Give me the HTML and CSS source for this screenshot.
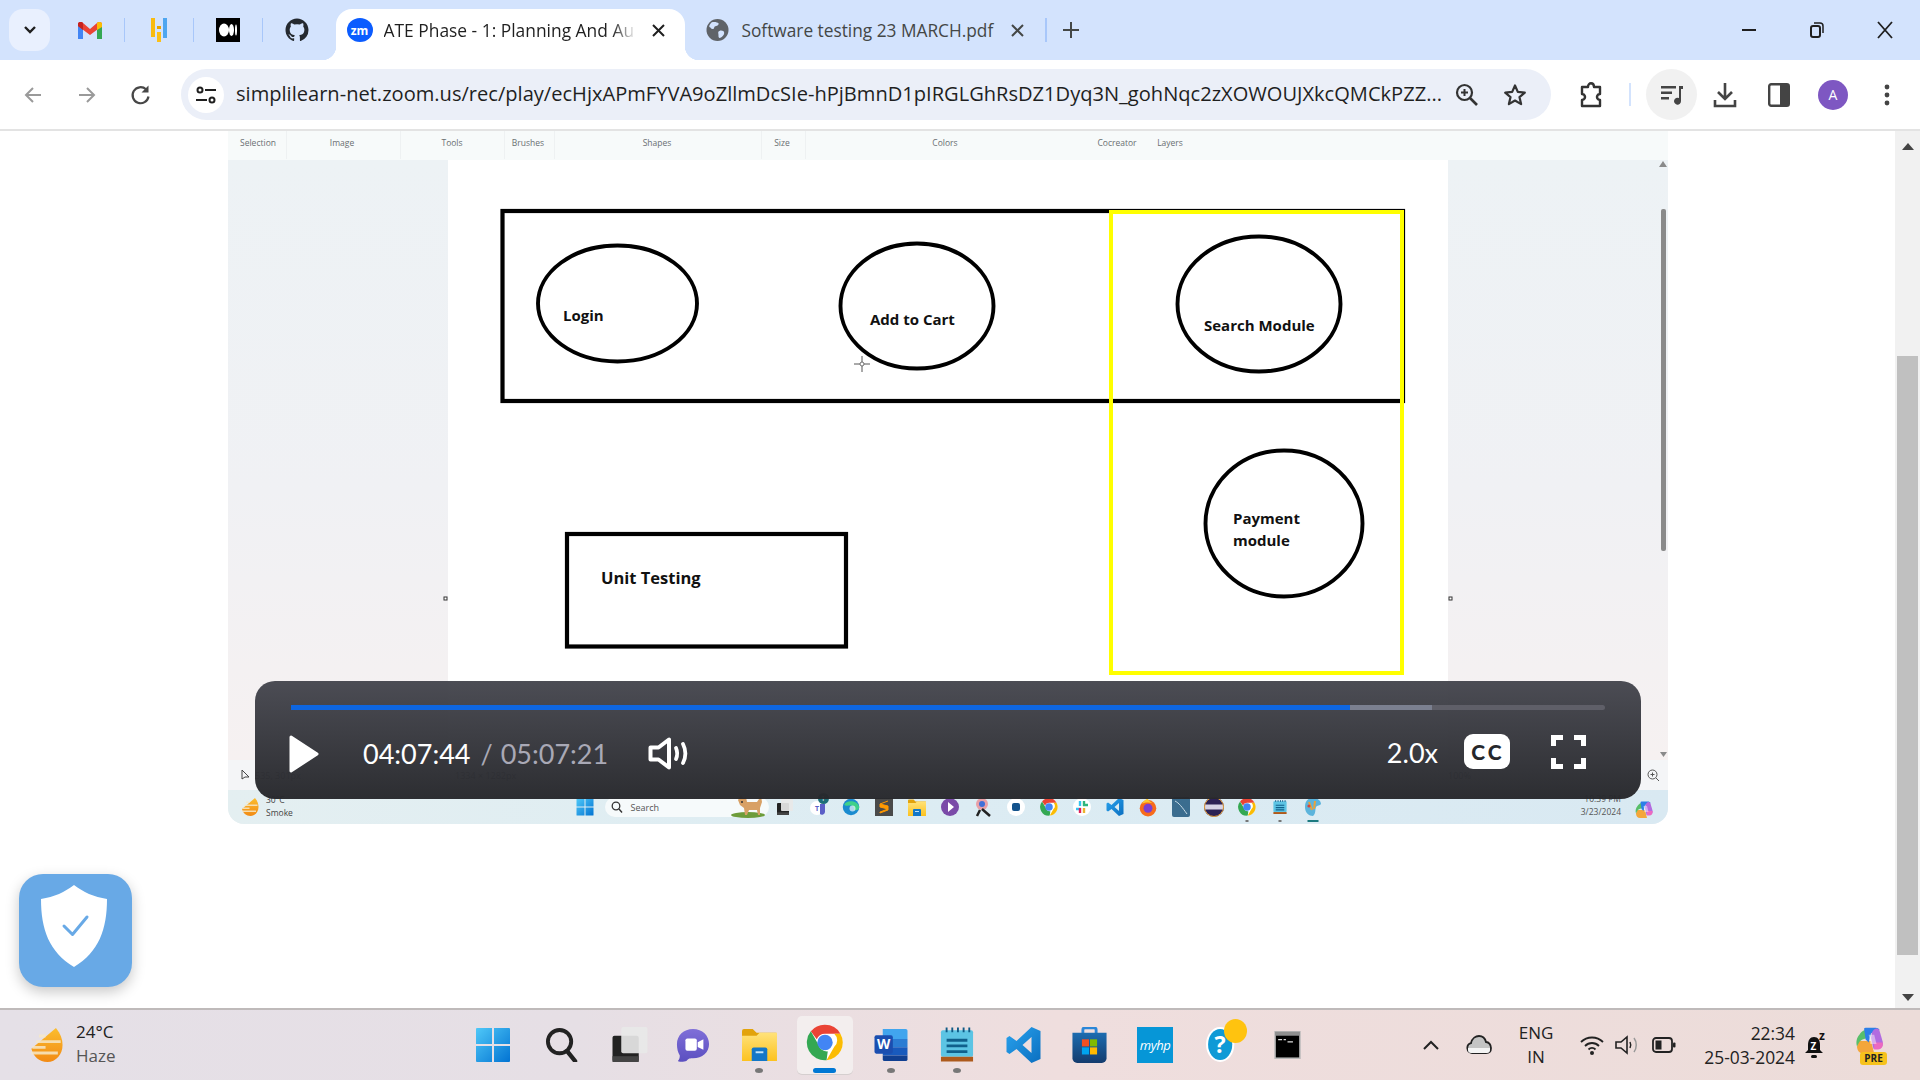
FILE: index.html
```html
<!DOCTYPE html>
<html lang="en">
<head>
<meta charset="utf-8">
<title>ATE Phase - 1: Planning And Automation</title>
<link rel="stylesheet" href="styles.css">
</head>
<body>
<svg class="sprite" width="0" height="0" aria-hidden="true">
  <defs>
    <linearGradient id="gWin" x1="0" y1="0" x2="1" y2="1"><stop offset="0" stop-color="#4fc8f8"/><stop offset="1" stop-color="#0273d2"/></linearGradient>
    <linearGradient id="gFolder" x1="0" y1="0" x2="0" y2="1"><stop offset="0" stop-color="#ffe27a"/><stop offset="1" stop-color="#fcc21f"/></linearGradient>
    <linearGradient id="gVs" x1="0" y1="0" x2="1" y2="1"><stop offset="0" stop-color="#2aa3ee"/><stop offset="1" stop-color="#0b6fc0"/></linearGradient>
    <linearGradient id="gSun" x1="0" y1="0" x2="0" y2="1"><stop offset="0" stop-color="#fbbd2e"/><stop offset="1" stop-color="#f28a14"/></linearGradient>
    <linearGradient id="gStore" x1="0" y1="0" x2="0" y2="1"><stop offset="0" stop-color="#1c6cb0"/><stop offset="1" stop-color="#143c6e"/></linearGradient>
    <linearGradient id="gMeet" x1="0" y1="0" x2="0" y2="1"><stop offset="0" stop-color="#7f6fd8"/><stop offset="1" stop-color="#5b4fc0"/></linearGradient>
    <symbol id="i-win" viewBox="0 0 36 36"><path fill="url(#gWin)" d="M1 2a1 1 0 0 1 1-1h15v16H1zM19 1h15a1 1 0 0 1 1 1v15H19zM1 19h16v16H2a1 1 0 0 1-1-1zM19 19h16v15a1 1 0 0 1-1 1H19z"/></symbol>
    <symbol id="i-search" viewBox="0 0 34 36"><circle cx="15" cy="15" r="12" fill="none" stroke="#222" stroke-width="4"/><path d="M23 25l8 10" stroke="#222" stroke-width="4.5" stroke-linecap="round"/></symbol>
    <symbol id="i-tasks" viewBox="0 0 36 36"><rect x="0" y="9" width="27" height="27" rx="2" fill="#222"/><path fill="#444" d="M0 30h27v6H0z"/><rect x="9" y="0" width="27" height="27" rx="2" fill="#e8e8e8" opacity=".92"/></symbol>
    <symbol id="i-meet" viewBox="0 0 36 36"><path fill="url(#gMeet)" d="M18 1c10 0 17 7 17 16s-7 15-17 15c-3 0-5 0-7 3-2 1-9 1-9 0 2-2 2-5 2-6-2-3-3-7-3-12C1 8 8 1 18 1z"/><rect x="10" y="11" width="12" height="13" rx="2" fill="#fff"/><path fill="#fff" d="M23 15l6-3v11l-6-3z"/></symbol>
    <symbol id="i-folder" viewBox="0 0 36 34"><path fill="#e2a30c" d="M0 3a2 2 0 0 1 2-2h9l4 4h20a1 1 0 0 1 1 1v4H0z"/><path fill="url(#gFolder)" d="M0 8h15l3-3h18v29H0z"/><path fill="#1277c8" d="M10 22a2 2 0 0 1 2-2h12a2 2 0 0 1 2 2v12H10z"/><rect x="14" y="24" width="8" height="2" fill="#bfe3fa"/></symbol>
    <symbol id="i-chrome" viewBox="0 0 48 48"><circle cx="24" cy="24" r="23" fill="#fff"/><path fill="#ea4335" d="M24 1a23 23 0 0 1 20 11.5H24a11.5 11.5 0 0 0-10.7 7.3L5.6 9.5A23 23 0 0 1 24 1z"/><path fill="#fbbc04" d="M44 12.500a23 23 0 0 1-18 34.400l10-17.300a11.500 11.500 0 0 0 0-17.100z"/><path fill="#34a853" d="M5.600 9.500l10 17.300a11.500 11.500 0 0 0 12 8.700l-1.600 11.400A23 23 0 0 1 5.600 9.500z"/><circle cx="24" cy="24" r="10" fill="#4285f4"/></symbol>
    <symbol id="i-word" viewBox="0 0 36 36"><path fill="#41a5ee" d="M9 1h25a2 2 0 0 1 2 2v9H9z"/><path fill="#2b7cd3" d="M9 12h27v9H9z"/><path fill="#185abd" d="M9 21h27v9H9z"/><path fill="#103f91" d="M9 30h27v4a2 2 0 0 1-2 2H11a2 2 0 0 1-2-2z"/><rect x="0" y="8" width="20" height="20" rx="2" fill="#1a4eb0"/><text x="10" y="23" class="svg-w">W</text></symbol>
    <symbol id="i-note" viewBox="0 0 36 36"><rect x="1" y="3" width="34" height="28" rx="2" fill="#5cc4e4"/><path fill="#10608c" d="M7 12h22v3H7zM7 18h22v3H7zM7 24h22v3H7z"/><path fill="#0f5a86" d="M6 0h2v5H6zM12 0h2v5h-2zM18 0h2v5h-2zM24 0h2v5h-2zM30 0h2v5h-2z"/><rect x="1" y="31" width="34" height="5" fill="#ad5a1c"/></symbol>
    <symbol id="i-vs" viewBox="0 0 36 36"><path fill="url(#gVs)" d="M26 0l9 4v28l-9 4-15-14-7 5-3-2v-14l3-2 7 5zM26 10l-9 8 9 8z"/></symbol>
    <symbol id="i-store" viewBox="0 0 36 38"><path fill="none" stroke="#2a86d8" stroke-width="3" d="M11 8V3a2 2 0 0 1 2-2h10a2 2 0 0 1 2 2v5"/><path fill="url(#gStore)" d="M0 6h36v27a5 5 0 0 1-5 5H5a5 5 0 0 1-5-5z"/><path fill="#f25022" d="M10 13h7.500v7.500H10z"/><path fill="#7fba00" d="M18.500 13H26v7.500h-7.500z"/><path fill="#00a4ef" d="M10 21.500h7.500V29H10z"/><path fill="#ffb900" d="M18.500 21.500H26V29h-7.500z"/></symbol>
    <symbol id="i-help" viewBox="0 0 36 42"><ellipse cx="17" cy="21" rx="17" ry="21" fill="#fff"/><ellipse cx="17" cy="21" rx="14.500" ry="18.500" fill="#0f9ad6"/><text x="17" y="31" class="svg-q">?</text></symbol>
    <symbol id="i-cmd" viewBox="0 0 34 36"><rect width="34" height="36" fill="#b9b9b9"/><rect x="1" y="1" width="32" height="5" fill="#8f8f8f"/><rect x="2" y="6" width="30" height="28" fill="#000"/><path stroke="#ddd" stroke-width="1.500" d="M5 11h5M12 11h3M17 14h7"/></symbol>
    <symbol id="i-cop" viewBox="0 0 36 36"><path fill="#f4a63a" d="M4 18h16l4 16H10c-5 0-8-4-8-9z"/><path fill="#58bf6a" d="M2 25c-2-6 0-12 3-15 2-3 4-5 7-6l3 10-6 2c-3 1-5 4-7 9z"/><path fill="#2c7fe8" d="M11 2c1-1 3-1 4-1h11c2 0 4 1 5 3L20 8l-3 12-4-4z"/><path fill="#b26be0" d="M27 2c2 0 3 1 4 3l4 14c1 4-1 9-6 9l-6 0-3-14 1-6c1-3 3-6 6-6z"/><path fill="#ec6ac0" d="M24 20h11c1 5-2 9-6 9h-5z"/><path fill="#fff" opacity=".45" d="M17 10h7l3 12h-8z"/></symbol>
    <symbol id="i-sun" viewBox="0 0 36 36"><path fill="url(#gSun)" d="M28 0c5 6 7 12 7 18 0 10-7 18-16 18S4 30 2 22z"/><path fill="#f6e8c8" d="M10 7h7v3h-7zM7 13h26v3H7zM3 19h14v3H3zM2 25h28v3H2z" opacity=".85"/></symbol>
    <symbol id="i-edge" viewBox="0 0 24 24"><circle cx="12" cy="12" r="11" fill="#1a8bd0"/><path fill="#3fd18a" d="M3 9c2-6 17-7 20 3 0 4-4 5-7 4 1-3-1-6-5-6-3 0-6 1-8-1z"/><circle cx="14" cy="14" r="4" fill="#fff" opacity=".65"/></symbol>
    <symbol id="i-fox" viewBox="0 0 24 24"><circle cx="12" cy="13" r="11" fill="#f76b1c"/><circle cx="12" cy="13" r="6" fill="#7b3fd0"/><path fill="#ffcb2e" d="M4 7c3-5 6-6 8-7 0 3 3 4 6 6-5-1-10-1-14 1z"/></symbol>
  </defs>
</svg>

<header class="tabbar">
  <div class="tabsearch"><svg width="14" height="10" viewBox="0 0 14 10"><path d="M2 2l5 5 5-5" fill="none" stroke="#1f1f1f" stroke-width="2.400"/></svg></div>
  <div class="pin first"><svg width="24" height="17" viewBox="0 0 24 17"><path fill="#4285f4" d="M0 2v15h5V5z"/><path fill="#34a853" d="M24 2v15h-5V5z"/><path fill="#ea4335" d="M0 2c0-2 3-3 5-1l7 6 7-6c2-2 5-1 5 1v2l-12 9L0 4z"/><path fill="#fbbc04" d="M19 1c2-2 5-1 5 1v3l-5 3z"/><path fill="#c5221f" d="M0 2c0-2 3-3 5-1v7L0 4z"/></svg></div>
  <span class="pinsep"></span>
  <div class="pin"><svg width="16" height="24" viewBox="0 0 16 24"><rect x="0" y="0" width="4" height="19" fill="#f9bb10"/><rect x="6" y="14" width="4" height="10" fill="#fbc018"/><rect x="6" y="8" width="4" height="3" fill="#e8a400"/><rect x="12" y="0" width="4" height="20" fill="#4ea6f0"/></svg></div>
  <span class="pinsep"></span>
  <div class="pin"><svg width="24" height="24" viewBox="0 0 24 24"><rect width="24" height="24" fill="#000"/><ellipse cx="8" cy="12" rx="5" ry="6.500" fill="#fff"/><ellipse cx="15.500" cy="12" rx="2.500" ry="6" fill="#fff"/><ellipse cx="20" cy="12" rx="1" ry="5.500" fill="#fff"/></svg></div>
  <span class="pinsep"></span>
  <div class="pin"><svg width="24" height="24" viewBox="0 0 24 24"><path fill="#24292f" d="M12 .5C5.730.5.500 5.730.500 12c0 5.080 3.290 9.390 7.860 10.910.580.110.790-.250.790-.560v-2.020c-3.200.700-3.880-1.360-3.880-1.360-.520-1.330-1.280-1.690-1.280-1.690-1.050-.720.080-.700.080-.700 1.160.080 1.770 1.190 1.770 1.190 1.030 1.770 2.700 1.260 3.360.960.100-.750.400-1.260.730-1.550-2.560-.290-5.250-1.280-5.250-5.690 0-1.260.450-2.290 1.190-3.100-.120-.290-.520-1.460.110-3.050 0 0 .970-.310 3.170 1.180a11 11 0 0 1 5.770 0c2.200-1.490 3.170-1.180 3.170-1.180.630 1.590.230 2.760.110 3.050.740.810 1.190 1.840 1.190 3.100 0 4.420-2.690 5.390-5.260 5.680.410.360.780 1.060.780 2.140v3.170c0 .310.210.670.800.560A11.500 11.500 0 0 0 23.500 12C23.500 5.730 18.270.5 12 .5z"/></svg></div>

  <div class="tab active">
    <span class="favicon-zm">zm</span>
    <span class="tabtitle fade">ATE Phase - 1: Planning And Au</span>
    <svg class="tabclose-a" width="13" height="13" viewBox="0 0 13 13"><path d="M1 1l11 11M12 1L1 12" stroke="#1f1f1f" stroke-width="2"/></svg>
  </div>
  <div class="tab inactive">
    <svg width="23" height="24" viewBox="0 0 24 24"><circle cx="12" cy="12" r="11.500" fill="#5f6368"/><path fill="#d3e3fd" d="M6 4c3-1 6 0 7 1s-1 3-3 3-1 3-3 3-2-2-3-2-1-2 2-5zM14 13c2-1 5 0 5 2s-2 4-4 5-2-1-2-3-1-3 1-4z"/></svg>
    <span class="tabtitle2">Software testing 23 MARCH.pdf</span>
    <svg class="tabclose-i" width="13" height="13" viewBox="0 0 13 13"><path d="M1 1l11 11M12 1L1 12" stroke="#444746" stroke-width="2"/></svg>
  </div>
  <span class="tabsep"></span>
  <svg class="newtab" width="16" height="16" viewBox="0 0 16 16"><path d="M8 0v16M0 8h16" stroke="#444746" stroke-width="2"/></svg>

  <div class="winctl">
    <div class="winbtn"><svg width="14" height="2" viewBox="0 0 14 2"><rect width="14" height="2" fill="#1f1f1f"/></svg></div>
    <div class="winbtn"><svg width="14" height="16" viewBox="0 0 14 16"><rect x="1" y="4" width="9" height="11" rx="2" fill="none" stroke="#1f1f1f" stroke-width="2"/><path d="M4 1h6a3 3 0 0 1 3 3v7" fill="none" stroke="#1f1f1f" stroke-width="1.500"/></svg></div>
    <div class="winbtn"><svg width="16" height="18" viewBox="0 0 16 18"><path d="M1 1l14 16M15 1L1 17" stroke="#1f1f1f" stroke-width="1.800"/></svg></div>
  </div>
</header>

<nav class="toolbar">
  <div class="navbtn"><svg width="20" height="20" viewBox="0 0 20 20"><path d="M18 10H3M10 3l-7 7 7 7" fill="none" stroke="#9a9a9a" stroke-width="2"/></svg></div>
  <div class="navbtn"><svg width="20" height="20" viewBox="0 0 20 20"><path d="M2 10h15M10 3l7 7-7 7" fill="none" stroke="#9a9a9a" stroke-width="2"/></svg></div>
  <div class="navbtn"><svg width="22" height="22" viewBox="0 0 22 22"><path d="M18.500 12.500A8 8 0 1 1 16 5.300" fill="none" stroke="#474747" stroke-width="2.200"/><path d="M18.500 1.500v7h-7z" fill="#474747"/></svg></div>
  <div class="omnibox">
    <span class="sitechip"><svg width="22" height="22" viewBox="0 0 22 22"><g fill="none" stroke="#1f1f1f" stroke-width="2"><circle cx="5" cy="6" r="2.500"/><path d="M10 6h11M1 16h11"/><circle cx="17" cy="16" r="2.500"/></g></svg></span>
    <span class="url">simplilearn-net.zoom.us/rec/play/ecHjxAPmFYVA9oZllmDcSIe-hPjBmnD1pIRGLGhRsDZ1Dyq3N_gohNqc2zXOWOUJXkcQMCkPZZ...</span>
    <span class="omni-act"><svg width="24" height="24" viewBox="0 0 24 24"><circle cx="9.500" cy="9.500" r="7.500" fill="none" stroke="#333" stroke-width="2.200"/><path d="M15 15l7 7" stroke="#333" stroke-width="2.600"/><path d="M6 9.500h7M9.500 6v7" stroke="#333" stroke-width="2"/></svg></span>
    <span class="omni-act"><svg width="24" height="24" viewBox="0 0 24 24"><path d="M12 2.500l2.800 6.400 7 .7-5.300 4.600 1.600 6.900-6.100-3.600-6.100 3.600 1.600-6.900L2.200 9.600l7-.7z" fill="none" stroke="#333" stroke-width="2.200" stroke-linejoin="round"/></svg></span>
  </div>
  <div class="navbtn ext"><svg width="26" height="28" viewBox="0 0 26 28"><path d="M4 6h6c0-5 6-5 6 0h6v7c-3 0-3 3-3 3s0 3 3 3v6H4v-6c3 0 3-3 3-3s0-3-3-3z" fill="none" stroke="#333" stroke-width="2.400" stroke-linejoin="round"/></svg></div>
  <span class="toolsep"></span>
  <div class="mediabtn"><svg width="24" height="22" viewBox="0 0 24 22"><path d="M1 2h15v2.400H1zM1 7.500h11v2.400H1zM1 13h8v2.400H1z" fill="#444"/><path d="M19 2h4v3h-2v12a3.500 3.500 0 1 1-2-3z" fill="#444"/></svg></div>
  <div class="navbtn first-right"><svg width="24" height="26" viewBox="0 0 24 26"><path d="M12 1v15M5 10l7 7 7-7" fill="none" stroke="#444" stroke-width="2.600"/><path d="M2 18v6h20v-6" fill="none" stroke="#444" stroke-width="2.600"/></svg></div>
  <div class="navbtn"><svg width="22" height="24" viewBox="0 0 22 24"><rect x="1.200" y="1.200" width="19.600" height="21.600" rx="2" fill="none" stroke="#444" stroke-width="2.400"/><rect x="12" y="1" width="9" height="22" fill="#444"/></svg></div>
  <div class="navbtn"><span class="avatar">A</span></div>
  <div class="navbtn"><svg width="6" height="22" viewBox="0 0 6 22"><circle cx="3" cy="3" r="2.400" fill="#444"/><circle cx="3" cy="11" r="2.400" fill="#444"/><circle cx="3" cy="19" r="2.400" fill="#444"/></svg></div>
</nav>

<main class="viewport">
  <div class="page">
    <section class="video">
      <div class="rec-toolbar">
        <span class="rt rt-sel">Selection</span>
        <span class="rt rt-img">Image</span>
        <span class="rt rt-tool">Tools</span>
        <span class="rt rt-brush">Brushes</span>
        <span class="rt rt-shape">Shapes</span>
        <span class="rt rt-size">Size</span>
        <span class="rt rt-color">Colors</span>
        <span class="rt rt-co">Cocreator</span>
        <span class="rt rt-layer">Layers</span>
        <i class="rt-sep rs1"></i><i class="rt-sep rs2"></i><i class="rt-sep rs3"></i><i class="rt-sep rs4"></i><i class="rt-sep rs5"></i><i class="rt-sep rs6"></i>
      </div>
      <div class="rec-body">
        <div class="paper"></div>
      </div>
      <div class="rec-status">
        <svg class="st-arrow" width="10" height="12" viewBox="0 0 10 12"><path d="M1 1v9l3-2 4 0z" fill="none" stroke="#444"/></svg>
        <span class="st-text st-pos">535, 301px</span>
        <span class="st-text st-dim">1334 × 1282px</span>
        <span class="st-text st-zoom">100%</span>
        <svg class="st-zoomin" width="13" height="13" viewBox="0 0 13 13"><circle cx="5.500" cy="5.500" r="4.500" fill="none" stroke="#555"/><path d="M9 9l3 3M3.500 5.500h4M5.500 3.500v4" stroke="#555"/></svg>
      </div>
      <div class="mini-task">
        <div class="mini-weather">
          <svg width="18" height="18"><use href="#i-sun"/></svg>
          <div class="mini-wtext"><span class="mw1">30°C</span><span class="mw2">Smoke</span></div>
        </div>
        <svg class="mini-start" width="18" height="18"><use href="#i-win"/></svg>
        <div class="mini-search">
          <svg width="12" height="12" viewBox="0 0 12 12"><circle cx="5" cy="5" r="3.800" fill="none" stroke="#333" stroke-width="1.300"/><path d="M8 8l3 3.500" stroke="#333" stroke-width="1.400"/></svg>
          <span>Search</span>
          <svg class="mini-dog" width="34" height="24" viewBox="0 0 34 24"><ellipse cx="17" cy="21" rx="17" ry="3" fill="#6d9c3a"/><path fill="#d8a065" d="M7 6l3-5 2 3 3-1 1 5h10l4-6 1 6-2 6v7h-2l-1-5h-8l-2 5h-2l-1-7-4-3z"/><circle cx="11" cy="8" r="1" fill="#333"/></svg>
        </div>
        <div class="mini-apps">
          <span class="mini-cell"><svg width="16" height="16"><use href="#i-tasks"/></svg></span>
          <span class="mini-cell mini-teams"><svg width="18" height="18" viewBox="0 0 18 18"><circle cx="8" cy="10" r="7" fill="#fff"/><text x="6" y="13" class="svg-t">T</text><path d="M11 6h5v8a3 3 0 0 1-5 2z" fill="#5b5fc7"/></svg><b class="mini-badge">1</b></span>
          <span class="mini-cell"><svg width="18" height="18"><use href="#i-edge"/></svg></span>
          <span class="mini-cell"><svg width="18" height="18" viewBox="0 0 18 18"><rect width="18" height="18" fill="#4a4a4a"/><path d="M13 3L5 6v3l8 2v-0l-8 3 0 1 8-3V8L5 6" fill="#ff9800" stroke="#ff9800"/></svg></span>
          <span class="mini-cell"><svg width="18" height="17"><use href="#i-folder"/></svg></span>
          <span class="mini-cell"><svg width="18" height="18" viewBox="0 0 18 18"><circle cx="9" cy="9" r="9" fill="#7a4aa8"/><path d="M7 4l6 5-6 5z" fill="#fff"/></svg></span>
          <span class="mini-cell"><svg width="18" height="20" viewBox="0 0 18 20"><circle cx="8" cy="7" r="6" fill="#e8a0a8"/><circle cx="8" cy="7" r="3" fill="#3f6fd8"/><path d="M8 12l8 7M6 13l-3 6" stroke="#222" stroke-width="2.500"/></svg></span>
          <span class="mini-cell"><svg width="18" height="18" viewBox="0 0 18 18"><circle cx="9" cy="9" r="9" fill="#fff"/><rect x="5" y="5" width="8" height="8" rx="2" fill="#14538c"/></svg></span>
          <span class="mini-cell"><svg width="18" height="20"><use href="#i-chrome"/></svg></span>
          <span class="mini-cell"><svg width="18" height="18" viewBox="0 0 18 18"><circle cx="9" cy="9" r="9" fill="#fff"/><path d="M7 3v5M3 11h5" stroke="#36c5f0" stroke-width="2.400"/><path d="M11 3v5M10 7h5" stroke="#2eb67d" stroke-width="2.400"/><path d="M11 10v5" stroke="#ecb22e" stroke-width="2.400"/><path d="M7 10v5" stroke="#e01e5a" stroke-width="2.400"/></svg></span>
          <span class="mini-cell"><svg width="18" height="18"><use href="#i-vs"/></svg></span>
          <span class="mini-cell"><svg width="18" height="19"><use href="#i-fox"/></svg></span>
          <span class="mini-cell"><svg width="18" height="20" viewBox="0 0 18 20"><rect width="18" height="20" rx="2" fill="#3b6d8f"/><path d="M3 4c4 2 7 6 12 13" stroke="#c9dde8" fill="none"/></svg></span>
          <span class="mini-cell"><svg width="20" height="20" viewBox="0 0 20 20"><circle cx="10" cy="10" r="10" fill="#2c2255"/><rect x="1" y="7.500" width="18" height="5" fill="#d6d3e6"/><circle cx="10" cy="10" r="9.500" fill="none" stroke="#e9a23b"/></svg></span>
          <span class="mini-cell mini-dot"><svg width="18" height="20"><use href="#i-chrome"/></svg></span>
          <span class="mini-cell mini-dot"><svg width="14" height="22"><use href="#i-note"/></svg></span>
          <span class="mini-cell mini-open"><svg width="18" height="20" viewBox="0 0 18 20"><path d="M9 1c5 0 8 3 8 6-1 2-4 1-5 3s0 7-3 9c-4 0-8-3-8-9s3-9 8-9z" fill="#5cb4dc"/><path d="M5 5l3 8M11 4l-1 8" stroke="#e8a23b" stroke-width="2"/><circle cx="5" cy="9" r="1.600" fill="#d6453d"/></svg></span>
        </div>
        <div class="mini-clock"><span>10:39 PM</span><span>3/23/2024</span></div>
        <svg class="mini-cop" width="18" height="18"><use href="#i-cop"/></svg>
      </div>

      <svg class="drawing" viewBox="228 131 1440 693" width="1440" height="693">
        <rect x="502.500" y="211" width="900.500" height="190" class="bk"/>
        <ellipse cx="617.500" cy="303.500" rx="79.500" ry="58" class="bk2"/>
        <ellipse cx="917" cy="306" rx="76.500" ry="62.500" class="bk2"/>
        <ellipse cx="1259" cy="304" rx="81.500" ry="67.500" class="bk2"/>
        <ellipse cx="1284" cy="523.500" rx="78.500" ry="73" class="bk2"/>
        <rect x="567" y="534" width="279" height="112.500" class="bk"/>
        <rect x="1111" y="212" width="291" height="461" class="yl"/>
        <path d="M862 356v16M854 364h16" class="cross"/>
        <circle cx="862" cy="364" r="2" class="crossc"/>
        <rect x="444" y="597" width="3" height="3" class="handle"/>
        <rect x="1449" y="597" width="3" height="3" class="handle"/>
        <text x="563" y="321" class="lbl">Login</text>
        <text x="870" y="325" class="lbl">Add to Cart</text>
        <text x="1204" y="331" class="lbl">Search Module</text>
        <text x="1233" y="524" class="lbl">Payment</text>
        <text x="1233" y="546" class="lbl">module</text>
        <text x="601" y="584" class="lbl lbl-big">Unit Testing</text>
        <path d="M1663 161l4 6h-8z" class="sb"/>
        <rect x="1661" y="209" width="5" height="342" rx="2" class="sb"/>
        <path d="M1660 752h7l-3.500 5z" class="sb"/>
      </svg>

      <div class="player">
        <div class="progress"><span class="prog-played"></span><span class="prog-buffer"></span></div>
        <div class="player-row">
          <svg class="p-play" width="32" height="38" viewBox="0 0 32 38"><path d="M3 2l26 17L3 36z" fill="#fff" stroke="#fff" stroke-width="3" stroke-linejoin="round"/></svg>
          <span class="p-time">04:07:44</span>
          <span class="p-slash">/</span>
          <span class="p-total">05:07:21</span>
          <svg class="p-vol" width="40" height="33" viewBox="0 0 40 33"><path d="M2.500 10.500h8L21 2.500v28l-10.500-8h-8z" fill="none" stroke="#fff" stroke-width="4" stroke-linejoin="round"/><path d="M28 11c1.500 3.500 1.500 7.500 0 11" fill="none" stroke="#fff" stroke-width="3.800" stroke-linecap="round"/><path d="M35 7c3 6 3 13 0 19" fill="none" stroke="#fff" stroke-width="3.800" stroke-linecap="round"/></svg>
          <span class="p-speed">2.0x</span>
          <span class="p-cc">CC</span>
          <svg class="p-full" width="35" height="34" viewBox="0 0 35 34"><path d="M2.500 11V2.500H12M23 2.500h9.500V11M32.500 23v8.500H23M12 31.500H2.500V23" fill="none" stroke="#fff" stroke-width="5"/></svg>
        </div>
      </div>
    </section>
  </div>
  <aside class="scrollbar">
    <svg class="sb-up" width="12" height="7" viewBox="0 0 12 7"><path d="M6 0l6 7H0z" fill="#444"/></svg>
    <span class="sb-thumb"></span>
    <svg class="sb-down" width="12" height="7" viewBox="0 0 12 7"><path d="M0 0h12L6 7z" fill="#444"/></svg>
  </aside>
</main>

<div class="shield">
  <svg width="66" height="82" viewBox="0 0 66 82"><path d="M33 0c9 7 20 12 33 14 0 30-8 53-33 68C8 67 0 44 0 14 13 12 24 7 33 0z" fill="#fff"/><path d="M23 41l8.500 8.500L46 32" fill="none" stroke="#68a9e6" stroke-width="3" stroke-linecap="round" stroke-linejoin="round"/></svg>
</div>

<footer class="taskbar">
  <div class="weather">
    <svg width="35" height="34"><use href="#i-sun"/></svg>
    <div class="wtext"><span class="w-temp">24°C</span><span class="w-cond">Haze</span></div>
  </div>
  <div class="apps">
    <span class="app app-start"><svg width="36" height="36"><use href="#i-win"/></svg></span>
    <span class="app"><svg width="33" height="35"><use href="#i-search"/></svg></span>
    <span class="app app-tasks"><svg width="36" height="35"><use href="#i-tasks"/></svg></span>
    <span class="app"><svg width="34" height="34"><use href="#i-meet"/></svg></span>
    <span class="app open"><svg width="37" height="33"><use href="#i-folder"/></svg></span>
    <span class="app active"><svg width="38" height="37"><use href="#i-chrome"/></svg></span>
    <span class="app open"><svg width="36" height="33"><use href="#i-word"/></svg></span>
    <span class="app open"><svg width="34" height="35"><use href="#i-note"/></svg></span>
    <span class="app"><svg width="37" height="36"><use href="#i-vs"/></svg></span>
    <span class="app"><svg width="35" height="36"><use href="#i-store"/></svg></span>
    <span class="app"><span class="myhp">myhp</span></span>
    <span class="app app-help"><svg width="34" height="35"><use href="#i-help"/></svg><i class="help-dot"></i></span>
    <span class="app"><svg width="33" height="28"><use href="#i-cmd"/></svg></span>
  </div>
  <div class="tray">
    <span class="tr tr-chev"><svg width="16" height="10" viewBox="0 0 16 10"><path d="M1 9l7-7 7 7" fill="none" stroke="#222" stroke-width="2"/></svg></span>
    <span class="tr tr-cloud"><svg width="26" height="20" viewBox="0 0 26 20"><path d="M6 18a5 5 0 0 1-1-9.800C6 3 10 1 13 1c3 0 6 2 7 6 3 0 5 3 5 6s-2 5-5 5z" fill="#c4c4c4" stroke="#222" stroke-width="1.800"/><path d="M2 13h22v2a3 3 0 0 1-3 3H5a3 3 0 0 1-3-3z" fill="#f4f4f4"/></svg></span>
    <span class="tr tr-lang"><span>ENG</span><span>IN</span></span>
    <span class="tr tr-wifi"><svg width="24" height="20" viewBox="0 0 24 20"><g fill="none" stroke="#222" stroke-width="1.800"><path d="M1 7c6-6 16-6 22 0"/><path d="M5 11c4-4 10-4 14 0"/><path d="M8.500 14.500c2-2 5-2 7 0"/></g><circle cx="12" cy="18" r="2" fill="#222"/></svg></span>
    <span class="tr tr-vol"><svg width="24" height="22" viewBox="0 0 24 22"><path d="M1 8h5l6-5v16l-6-5H1z" fill="none" stroke="#222" stroke-width="1.600"/><path d="M15 8c1 2 1 4 0 6" fill="none" stroke="#222" stroke-width="1.500"/><path d="M19 4c3 4 3 10 0 14" fill="none" stroke="#999" stroke-width="1.500"/></svg></span>
    <span class="tr tr-bat"><svg width="24" height="16" viewBox="0 0 24 16"><rect x="1" y="1" width="19" height="14" rx="3" fill="none" stroke="#222" stroke-width="1.800"/><rect x="3.500" y="3.500" width="6" height="9" fill="#222"/><rect x="21" y="5.500" width="2.500" height="5" rx="1" fill="#222"/></svg></span>
    <span class="clock"><span>22:34</span><span>25-03-2024</span></span>
    <span class="tr tr-bell"><svg width="24" height="30" viewBox="0 0 24 30"><path d="M9 7c4 0 6 3 6 8v5l3 3H0l3-3v-5c0-5 2-8 6-8z" fill="#111"/><rect x="6" y="25" width="6" height="3" rx="1.500" fill="#111"/><text x="5.500" y="20" class="svg-z">Z</text><text x="14" y="10" class="svg-zz">z</text></svg></span>
    <span class="tr-cop"><svg width="35" height="28"><use href="#i-cop"/></svg><b class="pre">PRE</b></span>
  </div>
</footer>
</body>
</html>
```
FILE: styles.css
```css
* { box-sizing: border-box; }
html, body { margin: 0; padding: 0; }
body {
  width: 1920px; height: 1080px; overflow: hidden;
  display: flex; flex-direction: column;
  font-family: "Open Sans", "Noto Sans", sans-serif;
  background: #fff; position: relative;
}
.sprite { position: absolute; }
.svg-w { font: 700 15px "Open Sans", sans-serif; fill: #fff; text-anchor: middle; }
.svg-q { font: 700 28px "Open Sans", sans-serif; fill: #fff; text-anchor: middle; }
.svg-t { font: 700 7px "Open Sans", sans-serif; fill: #5b5fc7; }
.svg-z { font: 700 10px "Open Sans", sans-serif; fill: #fff; }
.svg-zz { font: 700 12px "Open Sans", sans-serif; fill: #111; }

/* tab strip */
.tabbar { height: 60px; flex: none; background: #d3e3fd; display: flex; align-items: center; padding-left: 9px; }
.tabsearch { width: 41px; height: 42px; background: #e9f0fe; border-radius: 14px; display: flex; align-items: center; justify-content: center; margin-right: 6px; }
.pin { width: 67.500px; height: 42px; display: flex; align-items: center; justify-content: center; }
.pinsep { width: 1.500px; height: 24px; background: #a8c7fa; }
.tab { height: 51px; align-self: flex-end; display: flex; align-items: center; position: relative; padding-bottom: 9px; }
.tab.active { width: 349px; margin-left: 5px; padding-left: 11px; background: #fff; border-radius: 16px 16px 0 0; }
.tab.active::before, .tab.active::after { content: ""; position: absolute; bottom: 0; width: 14px; height: 14px; }
.tab.active::before { left: -14px; background: radial-gradient(circle at 0 0, #d3e3fd 14px, #fff 14.500px); }
.tab.active::after { right: -14px; background: radial-gradient(circle at 100% 0, #d3e3fd 14px, #fff 14.500px); }
.favicon-zm { width: 26px; height: 24px; border-radius: 50%; background: #0b5cff; color: #fff; font-size: 12px; font-weight: 700; display: flex; align-items: center; justify-content: center; flex: none; }
.tabtitle { width: 253px; margin-left: 11px; font-size: 17.400px; color: #1f1f1f; white-space: nowrap; }
.fade { -webkit-mask-image: linear-gradient(90deg, #000 90%, transparent 100%); mask-image: linear-gradient(90deg, #000 90%, transparent 100%); }
.tabclose-a { margin-left: 15px; flex: none; }
.tab.inactive { padding-left: 21px; width: 360px; }
.tabtitle2 { width: 269px; margin-left: 13px; font-size: 17.300px; color: #444746; white-space: nowrap; }
.tabclose-i { margin-left: 0; flex: none; }
.tabsep { width: 2px; height: 24px; background: #a8c7fa; }
.newtab { margin-left: 16px; }
.winctl { margin-left: auto; display: flex; margin-right: 1px; }
.winbtn { width: 68px; height: 40px; display: flex; align-items: center; justify-content: center; }

/* toolbar */
.toolbar { height: 71px; flex: none; background: #fff; border-radius: 12px 12px 0 0; border-bottom: 2px solid #e3e3e3; display: flex; align-items: center; padding-left: 6px; }
.navbtn { width: 54px; height: 50px; display: flex; align-items: center; justify-content: center; flex: none; }
.omnibox { width: 1370px; height: 51px; margin-left: 13px; border-radius: 26px; background: #ebeff8; display: flex; align-items: center; padding: 0 12px 0 7px; }
.sitechip { width: 36px; height: 36px; border-radius: 50%; background: #fff; display: flex; align-items: center; justify-content: center; flex: none; }
.url { width: 1207px; flex: none; margin-left: 12px; margin-bottom: 2px; font-size: 20.080px; color: #1f1f1f; white-space: nowrap; }
.omni-act { width: 48px; display: flex; justify-content: center; flex: none; }
.ext { margin-left: 13px; }
.toolsep { width: 2px; height: 23px; background: #d3e3fd; margin-left: 11px; }
.mediabtn { width: 51px; height: 51px; border-radius: 26px; background: #f1f1f1; display: flex; align-items: center; justify-content: center; margin-left: 15px; flex: none; }
.first-right { margin-left: 1px; }
.avatar { width: 30px; height: 30px; border-radius: 50%; background: #7e57c2; color: #fff; font-size: 14px; display: flex; align-items: center; justify-content: center; }

/* viewport */
.viewport { flex: 1; min-height: 0; display: flex; background: #fff; }
.page { flex: 1; padding-left: 228px; }
.scrollbar { width: 25px; flex: none; background: #f1f1f1; display: flex; flex-direction: column; align-items: center; padding-top: 12px; }
.sb-up { flex: none; }
.sb-thumb { width: 21px; height: 599px; background: #c0c0c0; margin-top: 206px; flex: none; }
.sb-down { flex: none; margin-top: 39px; }

/* recorded video frame */
.video { width: 1440px; height: 693px; position: relative; display: flex; flex-direction: column; border-radius: 0 0 16px 16px; overflow: hidden; background: #f2f4f6; }
.rec-toolbar { height: 29px; flex: none; background: #f7fafa; position: relative; display: flex; align-items: center; padding-bottom: 6px; }
.rt { font-size: 8.500px; color: #6a6f72; position: absolute; transform: translateX(-50%); }
.rt-sel { left: 30px; } .rt-img { left: 114px; } .rt-tool { left: 224px; } .rt-brush { left: 300px; }
.rt-shape { left: 429px; } .rt-size { left: 554px; } .rt-color { left: 717px; } .rt-co { left: 889px; } .rt-layer { left: 942px; }
.rt-sep { position: absolute; top: 0; width: 1px; height: 28px; background: #eef1f2; }
.rs1 { left: 58px; } .rs2 { left: 172px; } .rs3 { left: 276px; } .rs4 { left: 326px; } .rs5 { left: 533px; } .rs6 { left: 577px; }
.rec-body { flex: 1; min-height: 0; background: linear-gradient(180deg, #edf2f5 0%, #f0f1f4 55%, #f6f1f1 100%); padding-left: 220px; }
.paper { width: 1000px; height: 100%; background: #fff; }
.rec-status { height: 30px; flex: none; background: #f4f5f7; position: relative; display: flex; align-items: center; }
.st-text { font-size: 9px; color: #55565c; position: absolute; }
.st-arrow { position: absolute; left: 13px; top: 9px; }
.st-pos { left: 27px; } .st-dim { left: 227px; } .st-zoom { left: 1220px; }
.st-zoomin { position: absolute; left: 1419px; top: 9px; }
.mini-task { height: 34px; flex: none; display: flex; align-items: flex-end; padding-bottom: 6px; background: linear-gradient(90deg, #e4eff1 0%, #dcecf3 50%, #d9e9f2 100%); position: relative; }
.mini-weather { width: 347.500px; height: 22px; flex: none; display: flex; align-items: center; padding-left: 13px; gap: 7px; }
.mini-wtext { display: flex; flex-direction: column; font-size: 8.500px; line-height: 13px; color: #444; margin-top: -2px; }
.mini-start { flex: none; margin-bottom: 2px; }
.mini-search { width: 164px; height: 20px; margin-left: 11px; margin-bottom: 1px; background: #f6fafb; border-radius: 10px; display: flex; align-items: center; padding-left: 6px; font-size: 9px; color: #555; gap: 8px; position: relative; flex: none; }
.mini-dog { position: absolute; right: 4px; bottom: -1px; }
.mini-apps { display: flex; flex: none; }
.mini-cell { width: 33px; height: 22px; display: flex; align-items: center; justify-content: center; position: relative; }
.mini-badge { position: absolute; left: 16px; top: -3px; width: 11px; height: 11px; border-radius: 50%; background: #1c6e78; color: #fff; font-size: 7px; font-weight: 400; display: flex; align-items: center; justify-content: center; }
.mini-dot::after, .mini-open::after { content: ""; position: absolute; bottom: -4px; left: 50%; transform: translateX(-50%); width: 3px; height: 2px; background: #777; }
.mini-open::after { width: 11px; background: #1c7a80; }
.mini-clock { margin-left: auto; margin-right: 47px; display: flex; flex-direction: column; align-items: flex-end; font-size: 8.500px; line-height: 13px; color: #555; margin-bottom: 0; }
.mini-cop { position: absolute; right: 15px; bottom: 5px; }
.drawing { position: absolute; left: 0; top: 0; pointer-events: none; }
.bk { fill: none; stroke: #000; stroke-width: 4.200; }
.bk2 { fill: none; stroke: #000; stroke-width: 3.900; }
.yl { fill: none; stroke: #ffff00; stroke-width: 4; }
.cross { fill: none; stroke: #555; stroke-width: 1; }
.crossc { fill: #fff; stroke: #555; stroke-width: .8; }
.handle { fill: #fff; stroke: #333; stroke-width: 1; }
.lbl { font: 700 15px "Open Sans", sans-serif; fill: #111; }
.lbl-big { font-size: 16.500px; }
.sb { fill: #8a8a8a; }

/* player */
.player { position: absolute; left: 27px; top: 550px; width: 1386px; height: 118px; border-radius: 20px; background: linear-gradient(180deg, rgba(70,71,79,.97) 0%, rgba(38,39,43,.97) 100%); padding: 24px 36px 0; display: flex; flex-direction: column; }
.progress { width: 1314px; height: 5px; background: #5f5f68; border-radius: 0 3px 3px 0; display: flex; flex: none; }
.prog-played { width: 1059px; background: #0e66e0; }
.prog-buffer { width: 82px; background: #7b8090; }
.player-row { flex: 1; display: flex; align-items: center; margin-top: 4px; margin-bottom: 6px; }
.p-play { margin-left: -3px; flex: none; }
.p-time { margin-left: 43px; font: 400 27px "Lato", sans-serif; color: #fff; }
.p-slash { margin-left: 10px; font: 400 27px "Lato", sans-serif; color: #a9a9b6; }
.p-total { margin-left: 8px; font: 400 27px "Lato", sans-serif; color: #a9a9b6; }
.p-vol { margin-left: 40px; flex: none; }
.p-speed { margin-left: auto; margin-top: -2px; font: 400 27px "Lato", sans-serif; color: #fff; }
.p-cc { width: 46px; height: 35px; margin-left: 26px; margin-top: -4px; background: #fff; border-radius: 9px; color: #26272b; font: 900 21px "Lato", sans-serif; letter-spacing: 3px; padding-left: 2px; display: flex; align-items: center; justify-content: center; }
.p-full { margin-left: 41px; margin-right: 19px; margin-top: -4px; flex: none; }

/* shield */
.shield { position: absolute; left: 19px; top: 874px; width: 113px; height: 113px; background: #68a9e6; border-radius: 24px; box-shadow: 0 5px 14px rgba(0,0,0,.22); display: flex; justify-content: center; padding: 11px 3px 0 0; }

/* taskbar */
.taskbar { height: 72px; flex: none; border-top: 2px solid #bfbaba; display: flex; align-items: center; background: linear-gradient(90deg, #e5e0e7 0%, #e6dfe5 30%, #efdede 55%, #ecdcd9 100%); }
.weather { width: 461.500px; flex: none; display: flex; align-items: center; padding-left: 29px; gap: 12px; }
.wtext { display: flex; flex-direction: column; font-size: 17px; line-height: 24px; margin-top: -2px; }
.w-temp { color: #222; } .w-cond { color: #555; }
.apps { display: flex; flex: none; margin-top: -1px; }
.app { width: 66px; height: 58px; display: flex; align-items: center; justify-content: center; position: relative; }
.app-start { margin-left: -1.500px; width: 68px; padding-right: 2px; }
.app-tasks svg { margin-left: 6px; }
.app.active { background: #f3eeee; border-radius: 5px; width: 56px; margin: 0 5px; box-shadow: 0 1px 0 #d5cfcf; }
.app.active svg { margin-top: -4px; }
.app.active::after { content: ""; position: absolute; bottom: 1px; left: 16px; width: 23px; height: 5px; border-radius: 3px; background: #0078d4; }
.app.open::after { content: ""; position: absolute; bottom: 1px; left: 50%; margin-left: -4px; width: 8px; height: 5px; border-radius: 50%; background: #777; }
.myhp { width: 36px; height: 36px; background: #0696d7; color: #fff; font-size: 13px; font-style: italic; display: flex; align-items: center; justify-content: center; letter-spacing: -.5px; }
.help-dot { position: absolute; left: 36px; top: 3px; width: 23px; height: 24px; border-radius: 50%; background: #ffc30f; }
.tray { display: flex; align-items: center; flex: none; margin-left: 91px; }
.tr { display: flex; align-items: center; justify-content: center; flex: none; }
.tr-chev { width: 40px; }
.tr-cloud { width: 48px; margin-left: 4px; }
.tr-lang { width: 52px; margin-left: 7px; flex-direction: column; font-size: 17px; line-height: 24px; color: #222; }
.tr-wifi { width: 34px; margin-left: 13px; }
.tr-vol { width: 34px; margin-left: 1px; }
.tr-bat { width: 34px; margin-left: 3px; }
.clock { width: 114px; display: flex; flex-direction: column; align-items: flex-end; font-size: 17.400px; line-height: 24px; color: #222; flex: none; }
.tr-bell { width: 36px; margin-left: 4px; }
.tr-cop { width: 36px; height: 36px; margin-left: 17px; position: relative; flex: none; }
.pre { position: absolute; left: 8px; bottom: -2px; width: 27px; height: 13px; background: #f6c21c; border-radius: 3px; font-size: 10px; line-height: 13px; text-align: center; color: #222; }
```
